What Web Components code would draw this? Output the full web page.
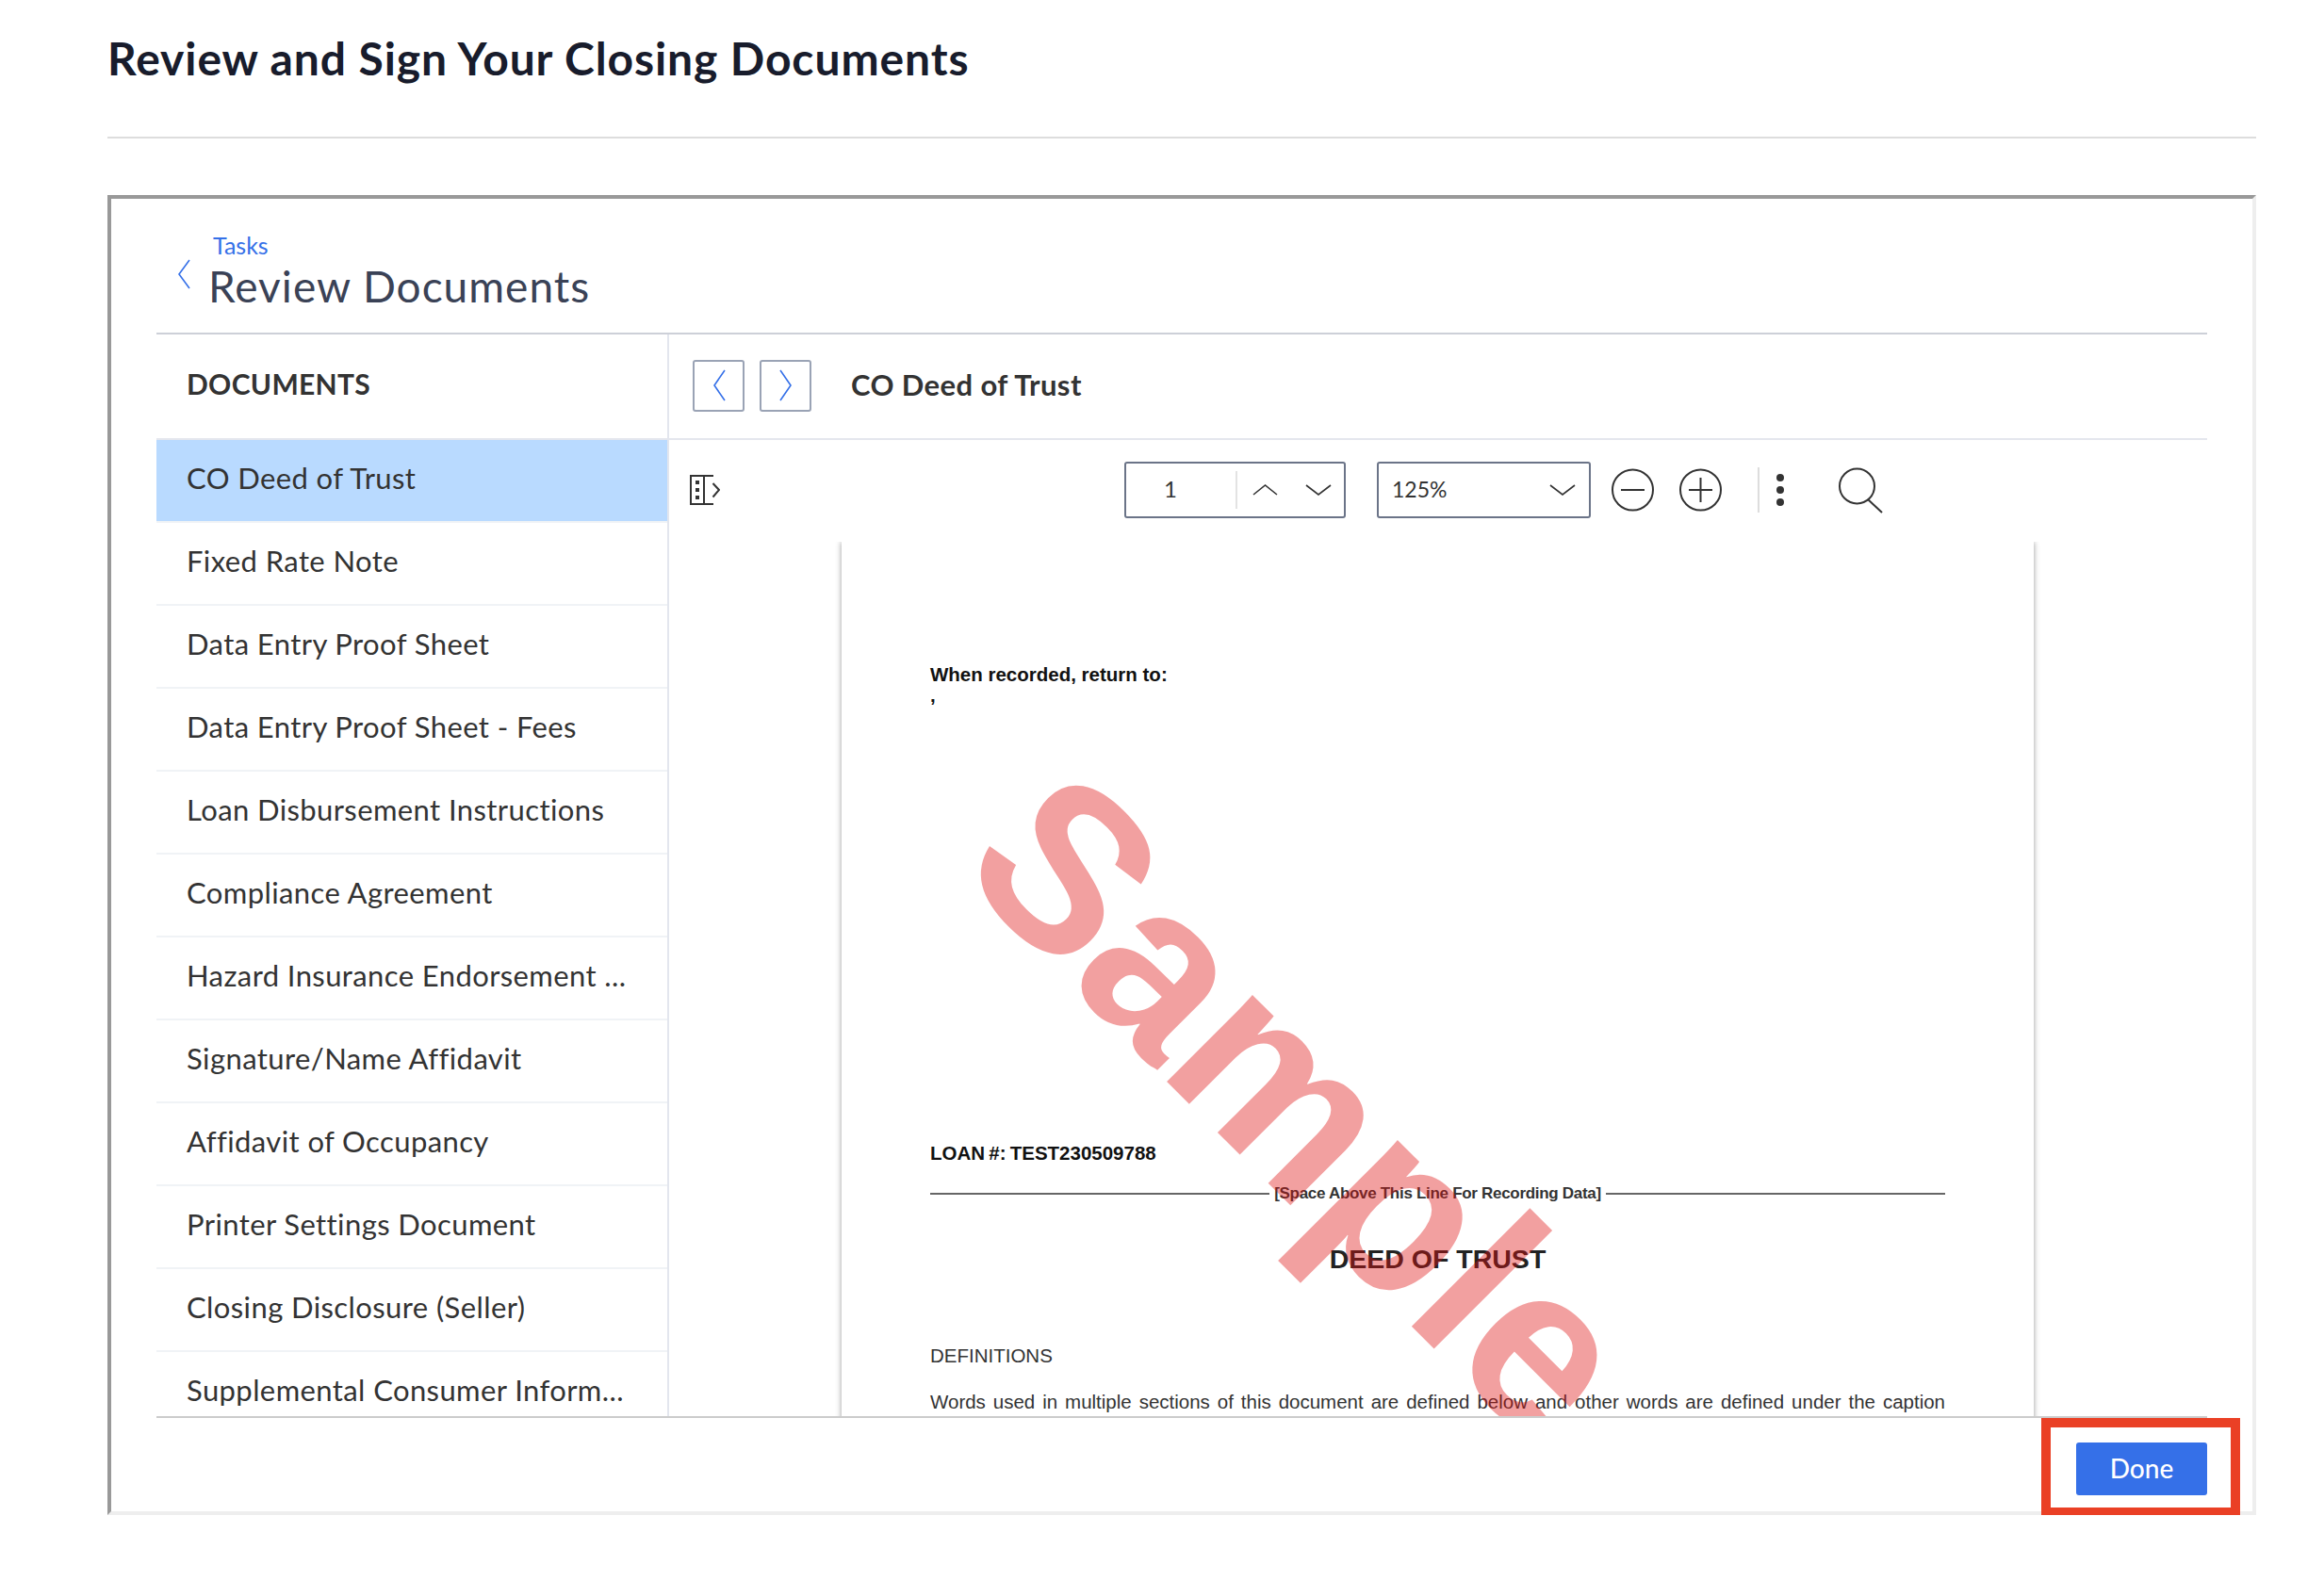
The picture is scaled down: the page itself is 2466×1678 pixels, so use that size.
<!DOCTYPE html>
<html lang="en">
<head>
<meta charset="utf-8">
<title>Review and Sign Your Closing Documents</title>
<style>
  html, body { margin: 0; background: #fff; }
  body { font-family: Lato, "Liberation Sans", sans-serif; color: #333; }
</style>
</head>
<body>
<closing-page>
  <span slot="title">Review and Sign Your Closing Documents</span>
  <task-panel>
    <doc-list slot="side">
      <doc-item selected>CO Deed of Trust</doc-item>
      <doc-item>Fixed Rate Note</doc-item>
      <doc-item>Data Entry Proof Sheet</doc-item>
      <doc-item>Data Entry Proof Sheet - Fees</doc-item>
      <doc-item>Loan Disbursement Instructions</doc-item>
      <doc-item>Compliance Agreement</doc-item>
      <doc-item>Hazard Insurance Endorsement ...</doc-item>
      <doc-item>Signature/Name Affidavit</doc-item>
      <doc-item>Affidavit of Occupancy</doc-item>
      <doc-item>Printer Settings Document</doc-item>
      <doc-item>Closing Disclosure (Seller)</doc-item>
      <doc-item>Supplemental Consumer Inform...</doc-item>
    </doc-list>
    <doc-viewer slot="main" name="CO Deed of Trust">
      <pdf-toolbar></pdf-toolbar>
      <sample-page></sample-page>
    </doc-viewer>
    <done-button slot="footer">Done</done-button>
  </task-panel>
</closing-page>

<script>
// page frame: big title, rule, then whatever panel goes inside
class ClosingPage extends HTMLElement {
  constructor(){
    super();
    this.attachShadow({mode: 'open'});
  }
  connectedCallback(){
    this.shadowRoot.innerHTML = `
      <style>
        :host{ display:block; padding:0 72px 0 114px; }
        h1{ margin:0; height:145px; box-sizing:border-box; padding-top:34px; font:700 48px/56px Lato, sans-serif; letter-spacing:.9px; color:#181c2c; }
        hr{ margin:0 0 60px; border:0; height:2px; background:#ddd; }
      </style>
      <h1><slot name="title"></slot></h1>
      <hr>
      <slot></slot>
    `;
  }
}

// the bordered box with "Tasks / Review Documents" header
class TaskPanel extends HTMLElement {
  constructor(){
    super();
    this.attachShadow({mode: 'open'});
  }
  connectedCallback(){
    this.shadowRoot.innerHTML = `
      <style>
        :host{ display:flex; flex-direction:column; box-sizing:border-box; height:1401px; padding:0 48px;
               border:4px solid; border-color:#999 #eee #eee #999; }
        header{ display:flex; align-items:flex-end; height:144px; box-sizing:border-box; border-bottom:2px solid #cdd0d8; flex:none; }
        svg{ margin:0 19px 46px 22px; flex:none; }
        .tasks{ font:400 25px/28px Lato, sans-serif; color:#3570e8; margin:0 0 5px 5px; }
        h2{ margin:0 0 24px; font:400 46px/50px Lato, sans-serif; letter-spacing:1px; color:#3a4256; }
        .split{ flex:1; display:flex; min-height:0; }
        .split ::slotted([slot=side]){ width:544px; flex:none; }
        .split ::slotted([slot=main]){ flex:1; min-width:0; }
        footer{ height:101px; box-sizing:border-box; border-top:2px solid #ccc; padding-top:26px; display:flex; justify-content:flex-end; flex:none; }
      </style>
      <header>
        <svg width="14" height="32" viewBox="0 0 14 32" fill="none" stroke="#3570e8" stroke-width="1.6"><path d="M13 1 2 16l11 15"/></svg>
        <div>
          <div class="tasks">Tasks</div>
          <h2>Review Documents</h2>
        </div>
      </header>
      <div class="split">
        <slot name="side"></slot>
        <slot name="main"></slot>
      </div>
      <footer><slot name="footer"></slot></footer>
    `;
  }
}

class DocList extends HTMLElement {
  constructor(){
    super();
    this.attachShadow({mode: 'open'});
  }
  connectedCallback(){
    this.shadowRoot.innerHTML = `
      <style>
        :host{ display:block; box-sizing:border-box; border-right:2px solid #e3e6ee; overflow:hidden; }
        h3{ margin:0; height:112px; box-sizing:border-box; padding:0 0 0 32px; border-bottom:2px solid #e4e6ee;
            font:700 30px/104px Lato, sans-serif; letter-spacing:.3px; color:#333; }
      </style>
      <h3>DOCUMENTS</h3>
      <slot></slot>
    `;
  }
}

class DocItem extends HTMLElement {
  constructor(){
    super();
    this.attachShadow({mode: 'open'});
  }
  connectedCallback(){
    this.shadowRoot.innerHTML = `
      <style>
        :host{ display:block; box-sizing:border-box; height:88px; padding-left:32px; border-bottom:2px solid #f0f3f6;
               font:400 31px/81px Lato, sans-serif; letter-spacing:.4px; color:#333; white-space:nowrap; }
        :host([selected]){ background:linear-gradient(#b9daff,#b9daff) top/100% 86px no-repeat; }
      </style>
      <slot></slot>
    `;
  }
}

// right side: prev/next bar and the pdf area
class DocViewer extends HTMLElement {
  constructor(){
    super();
    this.attachShadow({mode: 'open'});
  }
  connectedCallback(){
    this.shadowRoot.innerHTML = `
      <style>
        :host{ display:flex; flex-direction:column; min-height:0; overflow:hidden; }
        .bar{ display:flex; align-items:center; height:112px; box-sizing:border-box; padding:0 0 2px 25px; border-bottom:2px solid #e4e6ee; flex:none; }
        button{ width:55px; height:55px; padding:0; box-sizing:border-box; display:flex; align-items:center; justify-content:center;
                border:2px solid #9aa3b5; border-radius:3px; background:#fff; }
        button + button{ margin-left:16px; }
        .name{ margin:0 0 3px 42px; font:700 31px/40px Lato, sans-serif; letter-spacing:.4px; color:#333; }
      </style>
      <div class="bar">
        <button aria-label="Previous"><svg width="14" height="34" viewBox="0 0 14 34" fill="none" stroke="#3570e8" stroke-width="1.6"><path d="M13 1 2 17l11 16"/></svg></button>
        <button aria-label="Next"><svg width="14" height="34" viewBox="0 0 14 34" fill="none" stroke="#3570e8" stroke-width="1.6"><path d="M1 1l11 16L1 33"/></svg></button>
        <div class="name">${this.getAttribute('name')}</div>
      </div>
      <slot></slot>
    `;
  }
}

class PdfToolbar extends HTMLElement {
  constructor(){
    super();
    this.attachShadow({mode: 'open'});
  }
  connectedCallback(){
    this.shadowRoot.innerHTML = `
      <style>
        :host{ display:flex; align-items:center; height:108px; box-sizing:border-box; padding:0 0 3px 22px; flex:none; font:400 24px/30px Lato, sans-serif; color:#333; }
        svg{ display:block; flex:none; }
        .box{ height:60px; box-sizing:border-box; border:2px solid #6b7488; border-radius:3px; display:flex; align-items:center; flex:none; }
        .page{ width:235px; margin-left:429px; }
        .num{ width:118px; padding-right:22px; box-sizing:border-box; text-align:center; border-right:2px solid #e3e3e3; height:40px; line-height:38px; flex:none; }
        .up{ margin-left:16px; }
        .down{ margin-left:29px; }
        .zoom{ width:227px; margin-left:33px; padding:0 14px; justify-content:space-between; font-size:23px; }
        .zoom span{ margin-bottom:2px; }
        .minus{ margin-left:22px; }
        .plus{ margin-left:27px; }
        .sep{ width:2px; height:48px; background:#ddd; margin-left:38px; flex:none; }
        .more{ margin-left:17px; }
        .find{ margin-left:57px; }
      </style>
      <svg width="32" height="32" viewBox="0 0 32 32" fill="none" stroke="#333" stroke-width="2">
        <path d="M25 1H1v30h24M15 1v30"/>
        <path fill="#333" stroke="none" d="M6 6h4v4H6zM6 14h4v4H6zM6 22h4v4H6z"/>
        <path d="M24.500 9l6.500 7-6.500 7.500"/>
      </svg>
      <div class="box page">
        <div class="num">1</div>
        <svg class="up" width="27" height="12" viewBox="0 0 27 12" fill="none" stroke="#333" stroke-width="1.6"><path d="M1 11 13.500 1 26 11"/></svg>
        <svg class="down" width="28" height="12" viewBox="0 0 28 12" fill="none" stroke="#333" stroke-width="1.6"><path d="M1 1l13 10L27 1"/></svg>
      </div>
      <div class="box zoom">
        <span>125%</span>
        <svg width="28" height="12" viewBox="0 0 28 12" fill="none" stroke="#333" stroke-width="1.6"><path d="M1 1l13 10L27 1"/></svg>
      </div>
      <svg class="minus" width="45" height="46" viewBox="0 0 45 46" fill="none" stroke="#333" stroke-width="2"><circle cx="22.500" cy="23" r="21.500"/><path d="M10 23h25"/></svg>
      <svg class="plus" width="45" height="46" viewBox="0 0 45 46" fill="none" stroke="#333" stroke-width="2"><circle cx="22.500" cy="23" r="21.500"/><path d="M10 23h25M22.500 10v26"/></svg>
      <div class="sep"></div>
      <svg class="more" width="10" height="36" viewBox="0 0 10 36" fill="#333"><circle cx="5" cy="5" r="4"/><circle cx="5" cy="18" r="4"/><circle cx="5" cy="31" r="4"/></svg>
      <svg class="find" width="47" height="50" viewBox="0 0 47 50" fill="none" stroke="#333" stroke-width="2"><circle cx="19.500" cy="21" r="18.500"/><path d="M31 35l15 14"/></svg>
    `;
  }
}

// the scanned document, the watermark sits on top of it
class SamplePage extends HTMLElement {
  constructor(){
    super();
    this.attachShadow({mode: 'open'});
  }
  connectedCallback(){
    this.shadowRoot.innerHTML = `
      <style>
        :host{ display:block; flex:1; min-height:0; overflow:hidden; font:400 20.5px/24px "Liberation Sans", Arial, sans-serif; color:#333; }
        .sheet{ position:relative; width:1265px; height:1200px; margin-left:183px; box-sizing:border-box; padding:129px 94px 0 94px; background:#fff; box-shadow:0 0 6px #999; }
        p{ margin:0; }
        .b{ font-weight:700; color:#111; }
        .comma{ margin-top:-2px; }
        .loan{ margin-top:462px; word-spacing:-1.5px; }
        .rule{ display:flex; align-items:center; gap:5px; margin-top:19px; font:700 17px/24px "Liberation Sans", Arial, sans-serif; letter-spacing:-.3px; color:#333; }
        .rule i{ flex:1; height:2px; background:#666; }
        h4{ margin:40px 0 0; text-align:center; font:700 28.5px/34px "Liberation Sans", Arial, sans-serif; color:#222; }
        .defs{ margin-top:74px; }
        .words{ margin-top:25px; text-align:justify; text-align-last:justify; }
        .mark{ position:absolute; left:121px; top:142px; transform-origin:0 207px; transform:rotate(45deg);
               font:700 245px/245px "Liberation Sans", Arial, sans-serif; color:rgba(222,17,17,.4); white-space:nowrap; }
      </style>
      <div class="sheet">
        <p class="b">When recorded, return to:</p>
        <p class="b comma">,</p>
        <p class="b loan">LOAN #: TEST230509788</p>
        <div class="rule"><i></i><span>[Space Above This Line For Recording Data]</span><i></i></div>
        <h4>DEED OF TRUST</h4>
        <p class="defs">DEFINITIONS</p>
        <p class="words">Words used in multiple sections of this document are defined below and other words are defined under the caption</p>
        <div class="mark">Sample</div>
      </div>
    `;
  }
}

// the red box is an annotation lying over the button
class DoneButton extends HTMLElement {
  constructor(){
    super();
    this.attachShadow({mode: 'open'});
  }
  connectedCallback(){
    this.shadowRoot.innerHTML = `
      <style>
        :host{ display:block; position:relative; width:139px; height:56px; }
        button{ width:100%; height:100%; border:0; border-radius:3px; background:#3570e8; color:#fff; font:500 28px/52px Lato, sans-serif; padding:0 0 2px; }
        .mark{ position:absolute; left:-37px; right:-35px; top:-26px; bottom:-23px; border:10px solid #ea4025; box-sizing:border-box; }
      </style>
      <button><slot></slot></button>
      <div class="mark"></div>
    `;
  }
}

customElements.define('closing-page', ClosingPage);
customElements.define('task-panel', TaskPanel);
customElements.define('doc-list', DocList);
customElements.define('doc-item', DocItem);
customElements.define('doc-viewer', DocViewer);
customElements.define('pdf-toolbar', PdfToolbar);
customElements.define('sample-page', SamplePage);
customElements.define('done-button', DoneButton);
</script>
</body>
</html>
